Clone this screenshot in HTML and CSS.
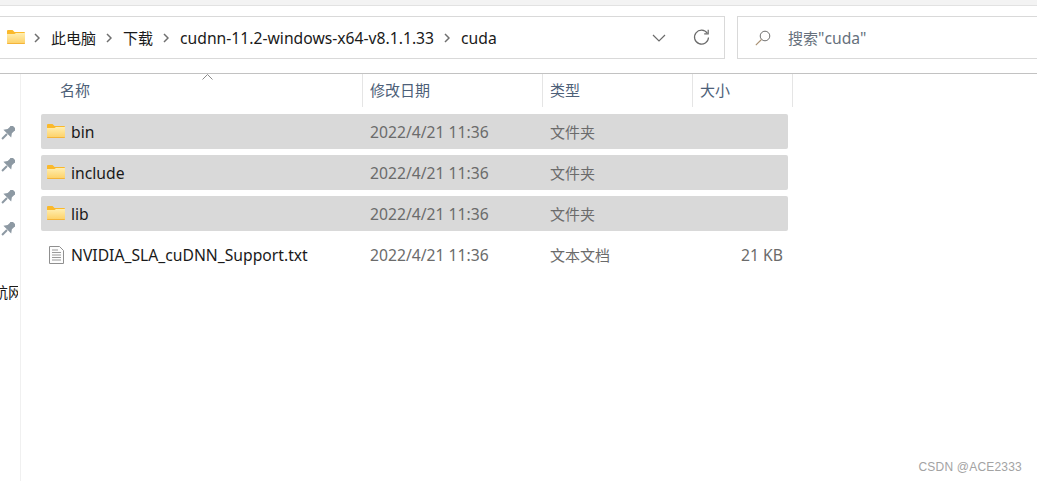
FILE: index.html
```html
<!DOCTYPE html>
<html>
	<head>
		<meta charset="utf-8">
		<title>cuda</title>
		<link rel="stylesheet" href="styles.css">
	</head>
	<body>
		<svg class="defs" width="0" height="0">
			<defs>
				<linearGradient id="folderFill" x1="0" y1="0" x2="0" y2="1">
					<stop offset="0" stop-color="#ffeeb0"/>
					<stop offset="1" stop-color="#fdd064"/>
				</linearGradient>
				<symbol id="folder" viewBox="0 0 18 14">
					<path d="M0 1a1 1 0 0 1 1-1h4.500l2 2H17a1 1 0 0 1 1 1v2H0z" fill="#fbb92a"/>
					<path d="M0 4h7.500l1.500-1h9v10a1 1 0 0 1-1 1H1a1 1 0 0 1-1-1z" fill="url(#folderFill)"/>
					<path d="M0 13h18a1 1 0 0 1-1 1H1a1 1 0 0 1-1-1z" fill="#f4b43a"/>
				</symbol>
				<symbol id="pin" viewBox="0 0 14 14">
					<g transform="rotate(45 7 7)" fill="#8d99a3">
						<path d="M2.800-1.500h8.400v2.200h-1.200v3.800l2.500 3.500H1.500L4 4.500V.7H2.800z"/>
						<path d="M6 8.400h2v7H6z"/>
					</g>
				</symbol>
				<symbol id="crumb" viewBox="0 0 6 10">
					<path d="M1 1l4 4-4 4" fill="none" stroke="#6f6f6f" stroke-width="1.500"/>
				</symbol>
			</defs>
		</svg>

		<div class="top-strip"></div>

		<div class="toolbar">
			<div class="address">
				<svg class="address-folder"><use href="#folder"/></svg>
				<svg class="crumb-sep"><use href="#crumb"/></svg>
				<span class="crumb cjk">此电脑</span>
				<svg class="crumb-sep"><use href="#crumb"/></svg>
				<span class="crumb cjk">下载</span>
				<svg class="crumb-sep"><use href="#crumb"/></svg>
				<span class="crumb">cudnn-11.2-windows-x64-v8.1.1.33</span>
				<svg class="crumb-sep"><use href="#crumb"/></svg>
				<span class="crumb">cuda</span>
				<svg class="address-down" viewBox="0 0 14 8"><path d="M1 1l6 6 6-6" fill="none" stroke="#6b6b6b" stroke-width="1.200"/></svg>
				<svg class="address-refresh" viewBox="0 0 17 17"><path d="M14.300 4.200A7 7 0 1 0 15.500 8.500" fill="none" stroke="#6b6b6b" stroke-width="1.200"/><path d="M15.200 .8v4h-4" fill="none" stroke="#6b6b6b" stroke-width="1.200"/></svg>
			</div>
			<div class="search">
				<svg class="search-icon" viewBox="0 0 16 16"><circle cx="10" cy="6" r="4.800" fill="none" stroke="#707070" stroke-width="1"/><path d="M6.500 9.500L.8 15.200" stroke="#a88f70" stroke-width="1.100"/></svg>
				<span class="search-text"><span class="cjk">搜索</span>"cuda"</span>
			</div>
		</div>

		<div class="content">
			<div class="nav">
				<svg class="nav-pin"><use href="#pin"/></svg>
				<svg class="nav-pin"><use href="#pin"/></svg>
				<svg class="nav-pin"><use href="#pin"/></svg>
				<svg class="nav-pin"><use href="#pin"/></svg>
				<div class="nav-label"><span class="nav-text">航网</span></div>
			</div>
			<div class="main">
				<div class="head">
					<div class="head-cell head-name">名称<svg class="sort-arrow" viewBox="0 0 11 6"><path d="M.5 5.500l5-5 5 5" fill="none" stroke="#8a8a8a" stroke-width="1"/></svg></div>
					<div class="head-cell">修改日期</div>
					<div class="head-cell">类型</div>
					<div class="head-cell">大小</div>
				</div>
				<div class="rows">
					<div class="row selected">
						<div class="name"><svg class="file-icon"><use href="#folder"/></svg>bin</div>
						<div class="meta">2022/4/21 11:36</div>
						<div class="meta cjk">文件夹</div>
						<div class="size"></div>
					</div>
					<div class="row selected">
						<div class="name"><svg class="file-icon"><use href="#folder"/></svg>include</div>
						<div class="meta">2022/4/21 11:36</div>
						<div class="meta cjk">文件夹</div>
						<div class="size"></div>
					</div>
					<div class="row selected">
						<div class="name"><svg class="file-icon"><use href="#folder"/></svg>lib</div>
						<div class="meta">2022/4/21 11:36</div>
						<div class="meta cjk">文件夹</div>
						<div class="size"></div>
					</div>
					<div class="row">
						<div class="name">
							<svg class="file-icon txt-icon" viewBox="0 0 15 18">
								<path d="M.5.5h10l4 4v13H.5z" fill="#fdfdfd" stroke="#8f8f8f"/>
								<path d="M3 4h6M3 6.500h9M3 9h9M3 11.500h9M3 14h9" stroke="#9a9a9a"/>
							</svg>NVIDIA_SLA_cuDNN_Support.txt</div>
						<div class="meta">2022/4/21 11:36</div>
						<div class="meta cjk">文本文档</div>
						<div class="size">21 KB</div>
					</div>
				</div>
			</div>
		</div>

		<div class="watermark">CSDN @ACE2333</div>
	</body>
</html>
```

FILE: styles.css
```css
html, body{
	margin: 0;
	height: 481px;
	overflow: hidden;
	background: #fff;
}
body{
	position: relative;
	font-family: "Noto Sans", "Noto Sans CJK SC", sans-serif;
	font-size: 15.7px;
	color: #1a1a1a;
}
.cjk{
	font-size: 15px;
}
.defs{
	display: block;
	height: 0;
}
.top-strip{
	height: 5px;
	background: #f3f3f3;
	border-bottom: 1px solid #e2e2e2;
}

/* 地址栏和搜索框 */
.toolbar{
	display: flex;
	height: 43px;
	padding: 10px 0 14px;
	border-bottom: 1px solid #c2c2c2;
	gap: 12px;
}
.address{
	display: flex;
	align-items: center;
	width: 725px;
	height: 43px;
	border: 1px solid #d9d9d9;
	border-left: 0;
	padding-left: 7px;
	box-sizing: border-box;
	flex: none;
}
.address-folder{
	width: 18px;
	height: 14px;
	margin-top: -2px;
	flex: none;
}
.crumb-sep{
	width: 6px;
	height: 10px;
	margin: 0 11px 0 10px;
	flex: none;
}
.address-folder + .crumb-sep{
	margin-left: 9px;
}
.crumb{
	white-space: nowrap;
}
.address-down{
	width: 14px;
	height: 8px;
	margin-left: auto;
	flex: none;
}
.address-refresh{
	width: 17px;
	height: 17px;
	margin: 0 14px 0 27px;
	flex: none;
}
.search{
	display: flex;
	align-items: center;
	flex: 1;
	height: 43px;
	border: 1px solid #d9d9d9;
	border-right: 0;
	box-sizing: border-box;
	padding-left: 17px;
	color: #66707c;
}
.search-icon{
	width: 16px;
	height: 16px;
	flex: none;
}
.search-text{
	margin-left: 17px;
}

/* 内容区 */
.content{
	display: flex;
	height: 407px;
}
.nav{
	width: 20px;
	border-right: 1px solid #f0f0f0;
	flex: none;
	display: flex;
	flex-direction: column;
	align-items: flex-start;
	padding-top: 52px;
	overflow: hidden;
}
.nav-pin{
	width: 14px;
	height: 14px;
	margin: 0 0 18px 1px;
	flex: none;
}
.nav-label{
	width: 18px;
	overflow: hidden;
	margin-top: 28px;
	white-space: nowrap;
	font-size: 15px;
	line-height: 20px;
}
.nav-text{
	display: block;
	margin-left: -7px;
}
.main{
	padding-left: 20px;
}
.head{
	display: grid;
	grid-template-columns: 322px 180px 150px 100px;
	height: 32px;
}
.head-cell{
	position: relative;
	border-right: 1px solid #e5e5e5;
	padding-left: 7px;
	color: #4d6078;
	line-height: 33px;
	font-size: 15px;
}
.head-name{
	padding-left: 19px;
}
.sort-arrow{
	position: absolute;
	left: 161px;
	top: 0;
	width: 11px;
	height: 6px;
}
.rows{
	display: flex;
	flex-direction: column;
	gap: 6px;
	margin-top: 8px;
	width: 747px;
}
.row{
	display: grid;
	grid-template-columns: 322px 180px 150px 95px;
	height: 35px;
	line-height: 36px;
	border-radius: 2px;
}
.selected{
	background: #d9d9d9;
}
.name{
	display: flex;
	align-items: center;
	padding-left: 6px;
	white-space: nowrap;
}
.file-icon{
	width: 18px;
	height: 14px;
	margin: -2px 6px 0 0;
	flex: none;
}
.txt-icon{
	width: 15px;
	height: 18px;
	margin: -1px 7px 0 2px;
}
.meta{
	padding-left: 7px;
	color: #6b6b6b;
	white-space: nowrap;
}
.size{
	padding-right: 5px;
	text-align: right;
	color: #6b6b6b;
}
.watermark{
	position: absolute;
	right: 15px;
	bottom: 7px;
	font-family: "Liberation Sans", sans-serif;
	font-size: 12px;
	color: #a3a3a3;
	letter-spacing: .2px;
}
```
